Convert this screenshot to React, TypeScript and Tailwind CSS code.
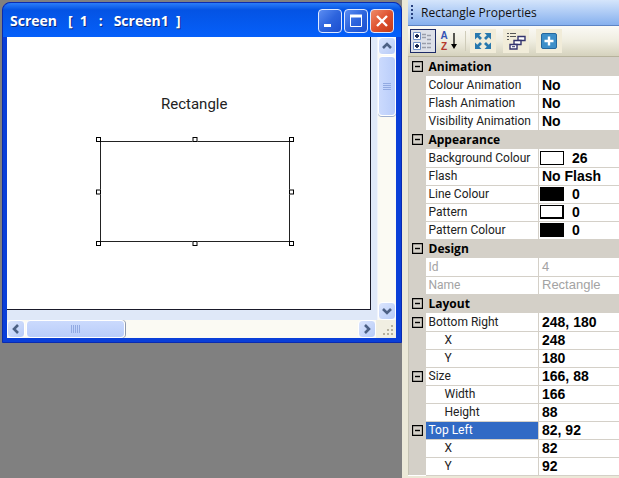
import { Fragment } from 'react';
import clsx from 'clsx';

type Property = {
  name: string;
  value: string;
  swatch?: 'white' | 'black' | 'pattern';
  expandable?: boolean;
  child?: boolean;
  disabled?: boolean;
  selected?: boolean;
};

type Category = {
  title: string;
  properties: Property[];
};

const categories: Category[] = [
  {
    title: 'Animation',
    properties: [
      { name: 'Colour Animation', value: 'No' },
      { name: 'Flash Animation', value: 'No' },
      { name: 'Visibility Animation', value: 'No' },
    ],
  },
  {
    title: 'Appearance',
    properties: [
      { name: 'Background Colour', value: '26', swatch: 'white' },
      { name: 'Flash', value: 'No Flash' },
      { name: 'Line Colour', value: '0', swatch: 'black' },
      { name: 'Pattern', value: '0', swatch: 'pattern' },
      { name: 'Pattern Colour', value: '0', swatch: 'black' },
    ],
  },
  {
    title: 'Design',
    properties: [
      { name: 'Id', value: '4', disabled: true },
      { name: 'Name', value: 'Rectangle', disabled: true },
    ],
  },
  {
    title: 'Layout',
    properties: [
      { name: 'Bottom Right', value: '248, 180', expandable: true },
      { name: 'X', value: '248', child: true },
      { name: 'Y', value: '180', child: true },
      { name: 'Size', value: '166, 88', expandable: true },
      { name: 'Width', value: '166', child: true },
      { name: 'Height', value: '88', child: true },
      { name: 'Top Left', value: '82, 92', expandable: true, selected: true },
      { name: 'X', value: '82', child: true },
      { name: 'Y', value: '92', child: true },
    ],
  },
];

const swatchStyles = {
  white: 'border border-black bg-white',
  black: 'bg-black',
  pattern: 'border border-r-2 border-b-2 border-black bg-white',
};

const handles = [
  '-left-[5px] -top-[5px]',
  'left-1/2 -translate-x-1/2 -top-[5px]',
  '-right-[5px] -top-[5px]',
  '-left-[5px] top-1/2 -translate-y-1/2',
  '-right-[5px] top-1/2 -translate-y-1/2',
  '-left-[5px] -bottom-[5px]',
  'left-1/2 -translate-x-1/2 -bottom-[5px]',
  '-right-[5px] -bottom-[5px]',
];

const arrows = {
  up: 'M4 10 8 6l4 4',
  down: 'M4 6l4 4 4-4',
  left: 'M10 4 6 8l4 4',
  right: 'M6 4l4 4-4 4',
};

function ScrollButton({ direction }: { direction: keyof typeof arrows }) {
  return (
    <button
      aria-label={`Scroll ${direction}`}
      className="flex size-[18px] shrink-0 items-center justify-center rounded-sm border border-white bg-linear-to-br from-[#dbe5fd] to-[#b7cbf7]"
    >
      <svg className="size-4" viewBox="0 0 16 16" fill="none" stroke="#4d6185" strokeWidth="2.6">
        <path d={arrows[direction]} />
      </svg>
    </button>
  );
}

function TitleButton({ label, close, children }: { label: string; close?: boolean; children: React.ReactNode }) {
  return (
    <button
      aria-label={label}
      className={clsx(
        'flex size-6 items-center justify-center rounded border border-[#dfe9ff] bg-linear-to-br',
        close ? 'from-[#ee8a68] via-[#df5230] to-[#c33a14]' : 'from-[#5c8df2] via-[#2d64dd] to-[#1c4fd0]'
      )}
    >
      <svg className="size-5" viewBox="0 0 20 20" fill="none" stroke="white">
        {children}
      </svg>
    </button>
  );
}

function ScreenWindow() {
  return (
    <section className="rounded-t-lg border border-[#0a2bb0] bg-[#0a3fd8]">
      <header className="flex h-[34px] items-center gap-[2px] rounded-t-lg bg-linear-to-b from-[#2b7df8] via-[#0453e4] via-20% to-[#0560fa] pt-[2px] pr-[7px] pl-[7px]">
        <h1 className="flex-1 font-['Open_Sans',sans-serif] text-[14px] leading-5 font-bold whitespace-pre text-white text-shadow-[1px_1px_0_#0a2a80]">
          {'Screen   [  1   :   Screen1  ]'}
        </h1>
        <TitleButton label="Minimize">
          <path d="M4 14.5h7" strokeWidth="3" />
        </TitleButton>
        <TitleButton label="Maximize">
          <path d="M4.5 5v10.5h11V5" />
          <path d="M4 5h12" strokeWidth="3" />
        </TitleButton>
        <TitleButton label="Close" close>
          <path d="m5 5 10 10M15 5 5 15" strokeWidth="2.4" />
        </TitleButton>
      </header>

      <div className="mr-[5px] mb-1 ml-1 bg-[#fbfaf3]">
        <div className="flex">
          <div className="flex-1 bg-[#dfe8f8] pr-[6px] pb-[10px]">
            {/* Drawing canvas */}
            <div className="relative h-[273px] border-r border-b border-[#1a1a2a] bg-white">
              <p className="absolute top-[57px] left-[154px] font-['Roboto',sans-serif] text-[15px] leading-5 text-[#222]">
                Rectangle
              </p>
              <div className="absolute top-[104px] left-[93px] h-[101px] w-[190px] border border-[#222]">
                {handles.map((position) => (
                  <span key={position} className={`absolute size-[5px] border border-black bg-white ${position}`} />
                ))}
              </div>
            </div>
          </div>
          <div className="flex w-[19px] flex-col border-l border-[#f0f3fb] bg-[#fbfaf3]">
            <ScrollButton direction="up" />
            <div className="mt-px flex h-[60px] w-[18px] flex-col items-center justify-center gap-px rounded-sm border border-white bg-linear-to-r from-[#cbdafd] to-[#b9cdfa] shadow-[0_1px_0_#9fb0d0]">
              {[0, 1, 2, 3].map((line) => (
                <span key={line} className="h-px w-2 border-b border-[#92aae2]" />
              ))}
            </div>
            <div className="flex-1" />
            <ScrollButton direction="down" />
          </div>
        </div>

        <div className="flex h-[18px]">
          <ScrollButton direction="left" />
          <div className="ml-px flex w-[99px] items-center justify-center gap-px rounded-sm border border-white bg-linear-to-b from-[#cbdafd] to-[#b9cdfa] shadow-[1px_0_0_#8f99ad]">
            {[0, 1, 2, 3, 4].map((line) => (
              <span key={line} className="h-2 w-px bg-[#92aae2]" />
            ))}
          </div>
          <div className="flex-1" />
          <ScrollButton direction="right" />
          <svg className="h-[18px] w-5 bg-[#f1efe2]" viewBox="0 0 20 18" fill="#b5b19f">
            <path d="M15 5h2v2h-2zM11 9h2v2h-2zM15 9h2v2h-2zM7 13h2v2H7zM11 13h2v2h-2zM15 13h2v2h-2z" />
          </svg>
        </div>
      </div>
    </section>
  );
}

function CollapseButton({ name }: { name: string }) {
  return (
    <button aria-label={`Collapse ${name}`} className="mx-auto block size-[11px]">
      <svg className="size-[11px]" viewBox="0 0 11 11" fill="none" stroke="black">
        <path d="M.5.5h10v10H.5z" strokeWidth="1.3" />
        <path d="M3 5.5h5" strokeWidth="1.4" />
      </svg>
    </button>
  );
}

function Toolbar() {
  return (
    <div className="flex h-[31px] items-center border-b border-[#b6b29c] bg-linear-to-b from-[#fbfaf6] via-[#efede0] to-[#d5d2bd] pl-[2px]">
      <button aria-label="Categorized" className="flex h-6 w-[26px] items-center justify-center border border-[#1c2a66] bg-[#dde0e8]">
        <svg className="h-5 w-[22px]" viewBox="0 0 22 20" fill="none">
          <path d="M1.5 1.5h7v7h-7zM1.5 11.5h7v7h-7z" fill="white" stroke="#6f8fc6" />
          <path d="M3 5h4M5 3v4M3 15h4M5 13v4" stroke="#17264f" strokeWidth="1.8" />
          <path d="M10 3.5h4M10 6.5h4M15 4.5h4M15 8.5h4M10 12.5h4M15 12.5h4M10 16.5h4M15 16.5h4" stroke="#9a9eaa" strokeWidth="1.5" />
        </svg>
      </button>
      <button aria-label="Alphabetical" className="ml-1 flex items-center">
        <span className="w-2 font-['Liberation_Sans',sans-serif] text-[10px] leading-[11px] font-bold">
          <span className="block text-[#3553b5]">A</span>
          <span className="block text-[#b5392c]">Z</span>
        </span>
        <svg className="ml-0.5 h-[18px] w-2" viewBox="0 0 8 18">
          <path d="M4 1v13" stroke="black" strokeWidth="1.3" />
          <path d="M1 12h6l-3 5z" fill="black" />
        </svg>
      </button>
      <span className="ml-[7px] h-5 w-px bg-[#cfccba]" />
      <button aria-label="Expand" className="ml-1 flex h-6 w-[26px] items-center justify-center bg-[#f1ecd9]">
        <svg className="size-[18px]" viewBox="0 0 18 18" fill="#2878ae">
          <path d="M1 1h6.500L5.200 3.300 8 6 6 8 3.300 5.200 1 7.500z" />
          <path d="M17 1h-6.500l2.300 2.300L10 6l2 2 2.700-2.800L17 7.500z" />
          <path d="M1 17h6.500l-2.300-2.300L8 12l-2-2-2.700 2.800L1 10.500z" />
          <path d="M17 17h-6.500l2.300-2.300L10 12l2-2 2.700 2.800 2.300-2.300z" />
        </svg>
      </button>
      <button aria-label="Layers" className="ml-[7px] flex h-6 w-[26px] items-center justify-center bg-[#f1ecd9]">
        <svg className="h-[18px] w-5" viewBox="0 0 20 18" fill="none">
          <path d="M1 1.500h2M4 1.500h6M1 4.500h2M4 4.500h6M1 7.500h2" stroke="#555" />
          <path d="M12 4.500h7v4h-7z" fill="white" stroke="#34346e" strokeWidth="1.4" />
          <path d="M8 8.500h7v4H8z" fill="white" stroke="#34346e" strokeWidth="1.4" />
          <path d="M4 12.500h7v4.500H4z" fill="white" stroke="#34346e" strokeWidth="1.4" />
          <path d="M6 14.700h3" stroke="#34346e" />
        </svg>
      </button>
      <button aria-label="Add" className="ml-[7px] flex h-6 w-[26px] items-center justify-center bg-[#f1ecd9]">
        <svg className="size-4" viewBox="0 0 16 16">
          <rect x=".5" y=".5" width="15" height="15" rx="1.5" fill="#3d8fc9" stroke="#24679e" />
          <path d="M8 3.5v9M3.5 8h9" stroke="white" strokeWidth="2.4" />
        </svg>
      </button>
    </div>
  );
}

function PropertyGrid() {
  return (
    <table className="w-full table-fixed border-collapse border-l border-[#c5c3b4] bg-white text-left font-['Roboto',sans-serif] text-[12px] leading-4 text-[#222]">
      <colgroup>
        <col className="w-[17px]" />
        <col className="w-[113px]" />
        <col />
      </colgroup>
      <tbody>
        {categories.map((category) => (
          <Fragment key={category.title}>
            <tr className="h-[19px] bg-[#d4d0c8]">
              <td className="p-0">
                <CollapseButton name={category.title} />
              </td>
              <th colSpan={2} className="p-0 pl-[3px] font-['Open_Sans',sans-serif] font-bold text-black">
                {category.title}
              </th>
            </tr>
            {category.properties.map((property, index) => (
              <tr key={index} className={clsx('h-[18px]', property.disabled && 'text-[#a3a3a3]')}>
                <td className="bg-[#d4d0c8] p-0">{property.expandable && <CollapseButton name={property.name} />}</td>
                <th
                  scope="row"
                  className={clsx(
                    'border-r border-b border-[#d4d0c8] p-0 font-normal whitespace-nowrap',
                    property.child ? 'pl-[19px]' : 'pl-[3px]',
                    property.selected && 'bg-[#316ac5] text-white'
                  )}
                >
                  {property.name}
                </th>
                <td className={clsx('border-b border-[#d4d0c8] p-0', property.swatch ? 'pl-px' : 'pl-[3px]')}>
                  <div
                    className={clsx(
                      "flex items-center gap-2 font-['Liberation_Sans',sans-serif]",
                      property.disabled ? 'text-[13px] leading-4' : 'text-[14px] leading-4 font-bold text-black'
                    )}
                  >
                    {property.swatch && <span className={`h-[14px] w-6 ${swatchStyles[property.swatch]}`} />}
                    {property.value}
                  </div>
                </td>
              </tr>
            ))}
          </Fragment>
        ))}
      </tbody>
    </table>
  );
}

export default function App() {
  return (
    <div className="flex min-h-screen bg-[#808080]">
      <main className="flex-1 p-[2px] pr-0">
        <ScreenWindow />
      </main>
      <aside className="w-[217px] bg-[#ece9d8] pl-[6px]">
        <header className="flex h-[26px] items-center gap-[7px] border-b border-[#5d84c4] bg-linear-to-b from-[#d5e5fb] to-[#86b0ee] pl-[3px]">
          <svg className="h-4 w-[3px]" viewBox="0 0 3 16" fill="#27407e">
            <path d="M0 0h2v2H0zM0 4h2v2H0zM0 8h2v2H0zM0 12h2v2H0z" />
          </svg>
          <h2 className="font-['Open_Sans',sans-serif] text-[12px] leading-4 text-[#111]">Rectangle Properties</h2>
        </header>
        <Toolbar />
        <PropertyGrid />
      </aside>
    </div>
  );
}
